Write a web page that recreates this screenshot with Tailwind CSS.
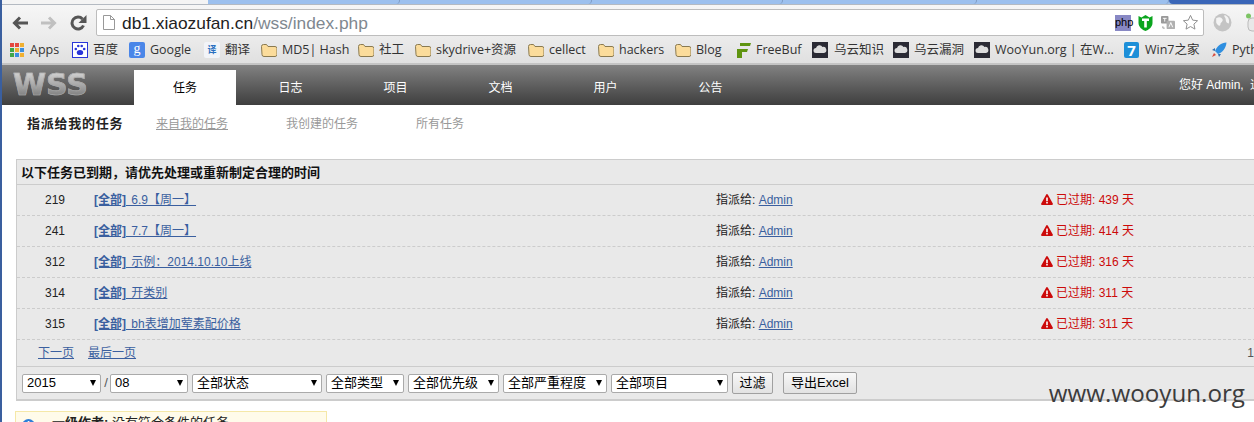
<!DOCTYPE html>
<html lang="en">
<head>
  <meta charset="UTF-8" />
  <title>WSS</title>
  <script src="https://cdn.jsdelivr.net/npm/@tailwindcss/browser@4"></script>
</head>
<body class="w-[1254px] h-[422px] overflow-hidden bg-white font-['Liberation_Sans','Noto_Sans_CJK_SC',sans-serif] text-[12px] text-[#222]">
  <div class="relative h-[422px] overflow-hidden border-l-2 border-[#3a5f9f]">

    <!-- Tab strip -->
    <div class="h-[5px] bg-[#9cc0ee] border-b border-[#b4bac2] flex">
      <div class="w-[206px] shrink-0 bg-[#f4f4f4]"></div>
      <div class="w-[192px] shrink-0 border-r border-[#7f9cc4] rounded-br-md"></div>
      <div class="w-[192px] shrink-0 border-r border-[#7f9cc4] rounded-br-md"></div>
      <div class="w-[191px] shrink-0 border-r border-[#7f9cc4] rounded-br-md"></div>
      <div class="w-[194px] shrink-0 border-r border-[#7f9cc4] rounded-br-md"></div>
      <div class="w-[192px] shrink-0 border-r border-[#7f9cc4] rounded-br-md"></div>
      <div class="flex-1 bg-[#3a66b8] rounded-bl-md"></div>
    </div>

    <!-- Toolbar -->
    <div class="h-[31px] pt-[4px] bg-linear-to-b from-[#f6f6f6] to-[#ececec] flex items-center">
      <svg class="w-[16px] h-[14px] ml-[10px] shrink-0" viewBox="0 0 16 14"><path d="M8 1.500 2.500 7 8 12.500M3 7h13" fill="none" stroke="#555" stroke-width="3"/></svg>
      <svg class="w-[16px] h-[14px] ml-[13px] shrink-0" viewBox="0 0 16 14"><path d="M8 1.500 13.500 7 8 12.500M13 7H0" fill="none" stroke="#c0c0c0" stroke-width="3"/></svg>
      <svg class="w-[17px] h-[16px] ml-[13px] shrink-0" viewBox="0 0 17 16"><path d="M13.500 10.500A6 6 0 1 1 12.500 4" fill="none" stroke="#555" stroke-width="3"/><path d="M16.500 0v8h-8z" fill="#555"/></svg>
      <div class="ml-[9px] w-[1108px] h-[27px] shrink-0 bg-white border border-[#bdbdbd] rounded-[2px] flex items-center">
        <svg class="w-[12px] h-[15px] ml-[6px] shrink-0" viewBox="0 0 12 15"><path d="M.5.500h7l4 4v10H.5zM7.500.500v4h4" fill="#fff" stroke="#999"/></svg>
        <span class="ml-[7px] text-[17.350px] text-[#222] whitespace-nowrap">db1.xiaozufan.cn<span class="text-[#808890]">/wss/index.php</span></span>
        <div class="ml-auto flex items-center mr-[4px]">
          <div class="w-[16px] h-[16px] bg-[#8888c4] text-black text-[11px] leading-[15px] text-center">php</div>
          <svg class="w-[17px] h-[18px] ml-[6px] shrink-0" viewBox="0 0 16 18"><path d="M1 2 4 3.500 8 1l4 2.500L15 2v7c0 4-4 7-7 8-3-1-7-4-7-8z" fill="#0aa51e"/><path d="M4.500 4.500h7v2.500H9.300v6.500H6.700V7H4.500z" fill="#fff"/></svg>
          <svg class="w-[14px] h-[14px] ml-[7px] shrink-0" viewBox="0 0 15 15"><rect width="8" height="8" rx="1" fill="#9a9a9a"/><rect x="6" y="5" width="9" height="9" rx="1" fill="#b0b0b0"/><path d="M2 2.500h4M4 2.500v3.500" stroke="#fff"/><path d="m8.500 12 2-5 2 5" fill="none" stroke="#fff"/><path d="M2 11v2h2" fill="none" stroke="#999"/></svg>
          <svg class="w-[17px] h-[17px] ml-[7px] shrink-0" viewBox="0 0 18 18"><path d="m9 1.500 2.300 5 5.200.6-3.900 3.600 1.100 5.300L9 13.300 4.300 16l1.100-5.300L1.500 7.100l5.200-.6z" fill="#fff" stroke="#8a8a8a" stroke-linejoin="round"/></svg>
        </div>
      </div>
      <svg class="w-[19px] h-[19px] ml-[9px] shrink-0" viewBox="0 0 18 18"><circle cx="9" cy="9" r="8.500" fill="#c4c4c4"/><path d="M3 5c3-2 5-1 6 1s-2 3-2 5-3 1-4-2zM11 2c3 1 5 4 4 8-2 0-3-2-3-4s-2-2-1-4z" fill="#f4f4f4"/></svg>
      <svg class="w-[18px] h-[20px] ml-[14px] shrink-0" viewBox="0 0 18 20"><circle cx="2.500" cy="3" r="2.500" fill="#7cc464"/><rect x="2" y="5" width="15" height="13" rx="4" fill="#e8e8e8" stroke="#bbb"/></svg>
    </div>

    <!-- Bookmarks -->
    <div class="h-[29px] pt-[1px] bg-linear-to-b from-[#ececec] to-[#e0e0e0] border-b-2 border-[#c4c4c4] flex items-center text-[12.500px] text-[#333] whitespace-nowrap font-['Open_Sans','Noto_Sans_CJK_SC',sans-serif]">
      <div class="ml-[8px] w-[14px] h-[14px] shrink-0 grid grid-cols-3 gap-px">
        <i class="bg-[#e5483f]"></i><i class="bg-[#e5483f]"></i><i class="bg-[#f0b030]"></i>
        <i class="bg-[#3fa64a]"></i><i class="bg-[#f0b030]"></i><i class="bg-[#3b8ee0]"></i>
        <i class="bg-[#3fa64a]"></i><i class="bg-[#3b8ee0]"></i><i class="bg-[#f0b030]"></i>
      </div>
      <span class="ml-[6px] w-[29px] shrink-0">Apps</span>
      <svg class="w-[16px] h-[16px] ml-[13px] shrink-0" viewBox="0 0 16 16"><rect x=".5" y=".5" width="15" height="15" fill="#fff" stroke="#2a35d8"/><ellipse cx="8" cy="10.500" rx="3.200" ry="2.600" fill="#2a35d8"/><circle cx="3.800" cy="7" r="1.300" fill="#2a35d8"/><circle cx="12.200" cy="7" r="1.300" fill="#2a35d8"/><circle cx="6.300" cy="4" r="1.300" fill="#2a35d8"/><circle cx="9.700" cy="4" r="1.300" fill="#2a35d8"/></svg>
      <span class="ml-[5px] w-[24px] shrink-0">百度</span>
      <div class="ml-[12px] w-[16px] h-[16px] shrink-0 bg-[#4a86e8] rounded-[2px] text-white text-[14px] leading-[14px] text-center font-['Liberation_Serif',serif]">g</div>
      <span class="ml-[5px] w-[42px] shrink-0">Google</span>
      <div class="ml-[12px] w-[16px] h-[16px] shrink-0 bg-[#f2f4f8] rounded-[2px] text-[#2a6fc0] text-[9px] leading-[16px] text-center font-bold">译</div>
      <span class="ml-[5px] w-[24px] shrink-0">翻译</span>
      <svg class="w-[16px] h-[13px] ml-[12px] shrink-0" viewBox="0 0 16 13"><use href="#folder"/></svg>
      <span class="ml-[5px] w-[63px] shrink-0">MD5| Hash</span>
      <svg class="w-[16px] h-[13px] ml-[13px] shrink-0" viewBox="0 0 16 13"><use href="#folder"/></svg>
      <span class="ml-[5px] w-[24px] shrink-0">社工</span>
      <svg class="w-[16px] h-[13px] ml-[12px] shrink-0" viewBox="0 0 16 13"><use href="#folder"/></svg>
      <span class="ml-[5px] w-[80px] shrink-0">skydrive+资源</span>
      <svg class="w-[16px] h-[13px] ml-[12px] shrink-0" viewBox="0 0 16 13"><use href="#folder"/></svg>
      <span class="ml-[5px] w-[36px] shrink-0">cellect</span>
      <svg class="w-[16px] h-[13px] ml-[13px] shrink-0" viewBox="0 0 16 13"><use href="#folder"/></svg>
      <span class="ml-[5px] w-[43px] shrink-0">hackers</span>
      <svg class="w-[16px] h-[13px] ml-[13px] shrink-0" viewBox="0 0 16 13"><use href="#folder"/></svg>
      <span class="ml-[5px] w-[25px] shrink-0">Blog</span>
      <svg class="w-[14px] h-[15px] ml-[16px] shrink-0" viewBox="0 0 14 15"><path d="M3 0h11l-1 3H3zM0 6h11l-1 3H5v6H0z" fill="#5f9410"/></svg>
      <span class="ml-[5px] w-[44px] shrink-0">FreeBuf</span>
      <svg class="w-[16px] h-[16px] ml-[12px] shrink-0" viewBox="0 0 16 16"><use href="#cloud"/></svg>
      <span class="ml-[6px] w-[47px] shrink-0">乌云知识</span>
      <svg class="w-[16px] h-[16px] ml-[12px] shrink-0" viewBox="0 0 16 16"><use href="#cloud"/></svg>
      <span class="ml-[5px] w-[48px] shrink-0">乌云漏洞</span>
      <svg class="w-[16px] h-[16px] ml-[12px] shrink-0" viewBox="0 0 16 16"><use href="#cloud"/></svg>
      <span class="ml-[5px] w-[116px] shrink-0">WooYun.org | 在W...</span>
      <div class="ml-[13px] w-[15px] h-[16px] shrink-0 bg-[#1d8fd8] rounded-[2px] text-white text-[15px] leading-[16px] text-center font-bold">7</div>
      <span class="ml-[6px] w-[54px] shrink-0">Win7之家</span>
      <svg class="w-[16px] h-[16px] ml-[12px] shrink-0" viewBox="0 0 16 16"><path d="M15.500.5C10 1 6 4 4 9l3 3c5-2 8-6 8.500-11.500z" fill="#2f8fe0"/><path d="M4 6 1 8l3 1zM10 12l-2 3-1-3z" fill="#2f6fb0"/><path d="m3 11-2 4 4-2z" fill="#d8483a"/></svg>
      <span class="ml-[5px] shrink-0">Python</span>
    </div>

    <!-- Nav -->
    <nav class="h-[40px] bg-linear-to-b from-[#828282] to-[#3f3f3f] flex text-white text-[12px] whitespace-nowrap">
      <div class="w-[132px] shrink-0 pl-[11px] pt-[5px]">
        <span class="text-[30px] leading-[30px] font-bold [-webkit-text-stroke:0.6px_#aaa] bg-linear-to-b from-[#e4e4e4] via-[#aaa] to-[#6a6a6a] bg-clip-text text-transparent font-['DejaVu_Sans',sans-serif]">WSS</span>
      </div>
      <a class="w-[102px] mt-[5px] bg-white text-black text-center leading-[37px] shrink-0">任务</a>
      <a class="w-[105px] ml-[2px] text-center leading-[46px] shrink-0">日志</a>
      <a class="w-[105px] text-center leading-[46px] shrink-0">项目</a>
      <a class="w-[105px] text-center leading-[46px] shrink-0">文档</a>
      <a class="w-[105px] text-center leading-[46px] shrink-0">用户</a>
      <a class="w-[105px] text-center leading-[46px] shrink-0">公告</a>
      <span class="ml-auto pt-[12px] leading-[16px] w-[75px] overflow-hidden">您好 Admin, <span class="ml-[3px]">退出</span></span>
    </nav>

    <!-- Sub tabs -->
    <div class="h-[54px] pt-[11px] flex text-[12px] text-[#999] leading-[16px] whitespace-nowrap">
      <a class="ml-[25px] w-[97px] text-[13px] tracking-[0.75px] font-bold text-[#222] shrink-0">指派给我的任务</a>
      <a class="ml-[32px] w-[72px] underline shrink-0">来自我的任务</a>
      <a class="ml-[58px] w-[72px] shrink-0">我创建的任务</a>
      <a class="ml-[58px] shrink-0">所有任务</a>
    </div>

    <!-- Overdue panel -->
    <section class="ml-[14px] w-[1240px] bg-[#e9e9e9] border-l border-t border-[#ccc] border-b-2 border-b-[#ccc]">
      <h2 class="h-[25px] pl-[4px] leading-[25px] text-[13px] font-bold text-[#111] border-b border-[#ccc]">以下任务已到期，请优先处理或重新制定合理的时间</h2>

      <div class="h-[31px] flex items-center border-b border-dashed border-[#ccc]">
        <span class="w-[77px] pl-[28px] shrink-0">219</span>
        <a class="w-[622px] shrink-0 text-[#3a5f9f] underline [word-spacing:2px]"><b>[全部]</b> 6.9【周一】</a>
        <span class="w-[325px] shrink-0">指派给: <a class="text-[#3a5f9f] underline">Admin</a></span>
        <svg class="w-[12px] h-[11px] mb-[2px] shrink-0" viewBox="0 0 12 11"><use href="#warn"/></svg>
        <span class="ml-[3px] text-[#cc0a0a]">已过期: 439 天</span>
      </div>
      <div class="h-[31px] flex items-center border-b border-dashed border-[#ccc]">
        <span class="w-[77px] pl-[28px] shrink-0">241</span>
        <a class="w-[622px] shrink-0 text-[#3a5f9f] underline [word-spacing:2px]"><b>[全部]</b> 7.7【周一】</a>
        <span class="w-[325px] shrink-0">指派给: <a class="text-[#3a5f9f] underline">Admin</a></span>
        <svg class="w-[12px] h-[11px] mb-[2px] shrink-0" viewBox="0 0 12 11"><use href="#warn"/></svg>
        <span class="ml-[3px] text-[#cc0a0a]">已过期: 414 天</span>
      </div>
      <div class="h-[31px] flex items-center border-b border-dashed border-[#ccc]">
        <span class="w-[77px] pl-[28px] shrink-0">312</span>
        <a class="w-[622px] shrink-0 text-[#3a5f9f] underline [word-spacing:2px]"><b>[全部]</b> 示例：2014.10.10上线</a>
        <span class="w-[325px] shrink-0">指派给: <a class="text-[#3a5f9f] underline">Admin</a></span>
        <svg class="w-[12px] h-[11px] mb-[2px] shrink-0" viewBox="0 0 12 11"><use href="#warn"/></svg>
        <span class="ml-[3px] text-[#cc0a0a]">已过期: 316 天</span>
      </div>
      <div class="h-[31px] flex items-center border-b border-dashed border-[#ccc]">
        <span class="w-[77px] pl-[28px] shrink-0">314</span>
        <a class="w-[622px] shrink-0 text-[#3a5f9f] underline [word-spacing:2px]"><b>[全部]</b> 开类别</a>
        <span class="w-[325px] shrink-0">指派给: <a class="text-[#3a5f9f] underline">Admin</a></span>
        <svg class="w-[12px] h-[11px] mb-[2px] shrink-0" viewBox="0 0 12 11"><use href="#warn"/></svg>
        <span class="ml-[3px] text-[#cc0a0a]">已过期: 311 天</span>
      </div>
      <div class="h-[31px] flex items-center border-b border-dashed border-[#ccc]">
        <span class="w-[77px] pl-[28px] shrink-0">315</span>
        <a class="w-[622px] shrink-0 text-[#3a5f9f] underline [word-spacing:2px]"><b>[全部]</b> bh表增加荤素配价格</a>
        <span class="w-[325px] shrink-0">指派给: <a class="text-[#3a5f9f] underline">Admin</a></span>
        <svg class="w-[12px] h-[11px] mb-[2px] shrink-0" viewBox="0 0 12 11"><use href="#warn"/></svg>
        <span class="ml-[3px] text-[#cc0a0a]">已过期: 311 天</span>
      </div>

      <!-- Pager -->
      <div class="h-[27px] flex items-center border-b border-[#ccc] text-[#3a5f9f]">
        <a class="ml-[21px] underline">下一页</a>
        <a class="ml-[14px] underline">最后一页</a>
        <span class="ml-auto mr-[2px] text-[#555]">1</span>
      </div>

      <!-- Filters -->
      <div class="h-[32px] pl-[5px] flex items-center text-[13px] text-black">
        <div class="w-[79px] h-[19px] mr-[1px] bg-white border border-[#aaa] rounded-[2px] flex items-center pl-[4px] pr-[4px] shrink-0"><span>2015</span><i class="ml-auto border-x-[3.500px] border-t-[6px] border-x-transparent border-t-black"></i></div>
        <span class="w-[8px] text-center text-[#555] shrink-0">/</span>
        <div class="w-[78px] h-[19px] mr-[4px] bg-white border border-[#aaa] rounded-[2px] flex items-center pl-[4px] pr-[4px] shrink-0"><span>08</span><i class="ml-auto border-x-[3.500px] border-t-[6px] border-x-transparent border-t-black"></i></div>
        <div class="w-[130px] h-[19px] mr-[4px] bg-white border border-[#aaa] rounded-[2px] flex items-center pl-[4px] pr-[4px] shrink-0"><span>全部状态</span><i class="ml-auto border-x-[3.500px] border-t-[6px] border-x-transparent border-t-black"></i></div>
        <div class="w-[78px] h-[19px] mr-[4px] bg-white border border-[#aaa] rounded-[2px] flex items-center pl-[4px] pr-[4px] shrink-0"><span>全部类型</span><i class="ml-auto border-x-[3.500px] border-t-[6px] border-x-transparent border-t-black"></i></div>
        <div class="w-[91px] h-[19px] mr-[4px] bg-white border border-[#aaa] rounded-[2px] flex items-center pl-[4px] pr-[4px] shrink-0"><span>全部优先级</span><i class="ml-auto border-x-[3.500px] border-t-[6px] border-x-transparent border-t-black"></i></div>
        <div class="w-[104px] h-[19px] mr-[4px] bg-white border border-[#aaa] rounded-[2px] flex items-center pl-[4px] pr-[4px] shrink-0"><span>全部严重程度</span><i class="ml-auto border-x-[3.500px] border-t-[6px] border-x-transparent border-t-black"></i></div>
        <div class="w-[117px] h-[19px] mr-[4px] bg-white border border-[#aaa] rounded-[2px] flex items-center pl-[4px] pr-[4px] shrink-0"><span>全部项目</span><i class="ml-auto border-x-[3.500px] border-t-[6px] border-x-transparent border-t-black"></i></div>
        <button class="w-[41px] h-[22px] bg-linear-to-b from-[#f8f8f8] to-[#e2e2e2] border border-[#a0a0a0] rounded-[2px] text-center shrink-0">过滤</button>
        <button class="ml-[10px] w-[74px] h-[22px] bg-linear-to-b from-[#f8f8f8] to-[#e2e2e2] border border-[#a0a0a0] rounded-[2px] text-center shrink-0">导出Excel</button>
      </div>
    </section>

    <!-- Empty notice -->
    <div class="ml-[13px] mt-[10px] w-[312px] h-[40px] bg-[#fffbea] border border-[#f5e8a8] pl-[6px] pt-[3px] flex text-[13px] leading-[16px]">
      <span class="w-[13px] h-[13px] mt-[4px] rounded-full bg-[#2f7ed8] text-white text-[10px] leading-[13px] text-center font-bold shrink-0">i</span>
      <span class="ml-[17px]"><b>一级作者:</b> 没有符合条件的任务</span>
    </div>

    <!-- Watermark -->
    <div class="absolute right-[9px] top-[378px] text-[24.200px] leading-[30px] text-[#3c3c3c] font-['Open_Sans',sans-serif]">www.wooyun.org</div>

    <!-- Shared icons -->
    <svg class="hidden">
      <symbol id="folder" viewBox="0 0 16 13"><path d="M.5 2.500q0-2 2-2h3l1.500 2h7q2 0 2 2v6q0 2-2 2h-11q-2 0-2-2z" fill="#fbdc9b" stroke="#8a7a50"/></symbol>
      <symbol id="cloud" viewBox="0 0 16 16"><rect width="16" height="16" fill="#2a2a34"/><path d="M4 11a2.500 2.500 0 0 1 0-5 3.500 3.500 0 0 1 6.500-1 3 3 0 0 1 1.500 6z" fill="#ddd"/></symbol>
      <symbol id="warn" viewBox="0 0 12 11"><path d="M6 1 11 10H1z" fill="#cc0a0a" stroke="#cc0a0a" stroke-width="1.800" stroke-linejoin="round"/><path d="M5.200 3.500h1.600v3.800H5.200zM5.200 8h1.600v1.500H5.200z" fill="#fff"/></symbol>
    </svg>
  </div>
</body>
</html>
